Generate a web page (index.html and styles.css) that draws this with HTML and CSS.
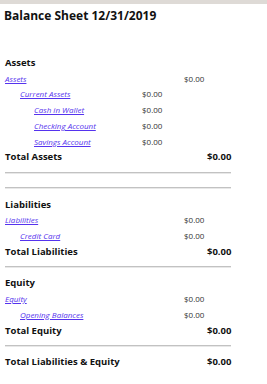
FILE: index.html
```html
<!DOCTYPE html>
<html lang="en">
  <head>
    <title>Balance Sheet</title>
    <meta charset="UTF-8" />
    <meta name="viewport" content="width=device-width, initial-scale=1" />
    <link rel="stylesheet" href="styles.css">
  </head>
  <body>
    <div class="topBar"></div>
    <h3 class="title">Balance Sheet 12/31/2019</h3>

    <div class="report">
      <!-- assets -->
      <div class="row heading"><span class="label">Assets</span></div>
      <div class="row">
        <a class="label lv1" href="#">Assets</a>
        <span class="amt1">$0.00</span>
      </div>
      <div class="row">
        <a class="label lv2" href="#">Current Assets</a>
        <span class="amt2">$0.00</span>
      </div>
      <div class="row">
        <a class="label lv3" href="#">Cash in Wallet</a>
        <span class="amt2">$0.00</span>
      </div>
      <div class="row">
        <a class="label lv3" href="#">Checking Account</a>
        <span class="amt2">$0.00</span>
      </div>
      <div class="row">
        <a class="label lv3" href="#">Savings Account</a>
        <span class="amt2">$0.00</span>
      </div>
      <div class="row total">
        <span class="label">Total Assets</span>
        <span class="amtTotal">$0.00</span>
      </div>
      <div class="row"><hr class="rule" /></div>
      <div class="row"><hr class="rule" /></div>

      <!-- liabilities -->
      <div class="row heading"><span class="label">Liabilities</span></div>
      <div class="row">
        <a class="label lv1" href="#">Liabilities</a>
        <span class="amt1">$0.00</span>
      </div>
      <div class="row">
        <a class="label lv2" href="#">Credit Card</a>
        <span class="amt1">$0.00</span>
      </div>
      <div class="row total">
        <span class="label">Total Liabilities</span>
        <span class="amtTotal">$0.00</span>
      </div>
      <div class="row"><hr class="rule" /></div>

      <!-- equity -->
      <div class="row heading"><span class="label">Equity</span></div>
      <div class="row">
        <a class="label lv1" href="#">Equity</a>
        <span class="amt1">$0.00</span>
      </div>
      <div class="row">
        <a class="label lv2" href="#">Opening Balances</a>
        <span class="amt1">$0.00</span>
      </div>
      <div class="row total">
        <span class="label">Total Equity</span>
        <span class="amtTotal">$0.00</span>
      </div>
      <div class="row"><hr class="rule" /></div>

      <div class="row total">
        <span class="label">Total Liabilities &amp; Equity</span>
        <span class="amtTotal">$0.00</span>
      </div>
    </div>
  </body>
</html>
```

FILE: styles.css
```css
body {
  padding: 0;
  margin: 0;
  font-family: "Open Sans", "Noto Sans", sans-serif;
  color: #111;
  background: #fff;
}
.topBar {
  height: 4px;
  background-color: #dedad6;
}
.title {
  margin: 0 0 0 4px;
  height: 23px;
  line-height: 23px;
  font-size: 12px;
  font-weight: bold;
}
.report {
  margin: 27.6px 0 0 5px;
  width: 226px;
}
/* label | sub-account amount | account amount | total */
.row {
  display: grid;
  grid-template-columns: 137px 42px 23px 24px;
  height: 15.76px;
  align-items: center;
  font-size: 8px;
  white-space: nowrap;
}
.label {
  grid-column: 1;
}
.lv2 {
  padding-left: 15px;
}
.lv3 {
  padding-left: 29px;
}
a.label {
  color: #5533ee;
  font-style: italic;
  text-decoration: underline;
}
.amt2 {
  grid-column: 2;
  color: #333;
}
.amt1 {
  grid-column: 3;
  color: #333;
}
.heading,
.total {
  font-size: 9.5px;
  font-weight: bold;
}
.total .label {
  grid-column: 1 / 4;
}
.amtTotal {
  grid-column: 4;
  text-align: right;
}
.rule {
  grid-column: 1 / 5;
  width: 100%;
  margin: 0;
  border: 0;
  border-top: 1px solid #c2c2c2;
  border-bottom: 1px solid #e8e8e8;
}
```
